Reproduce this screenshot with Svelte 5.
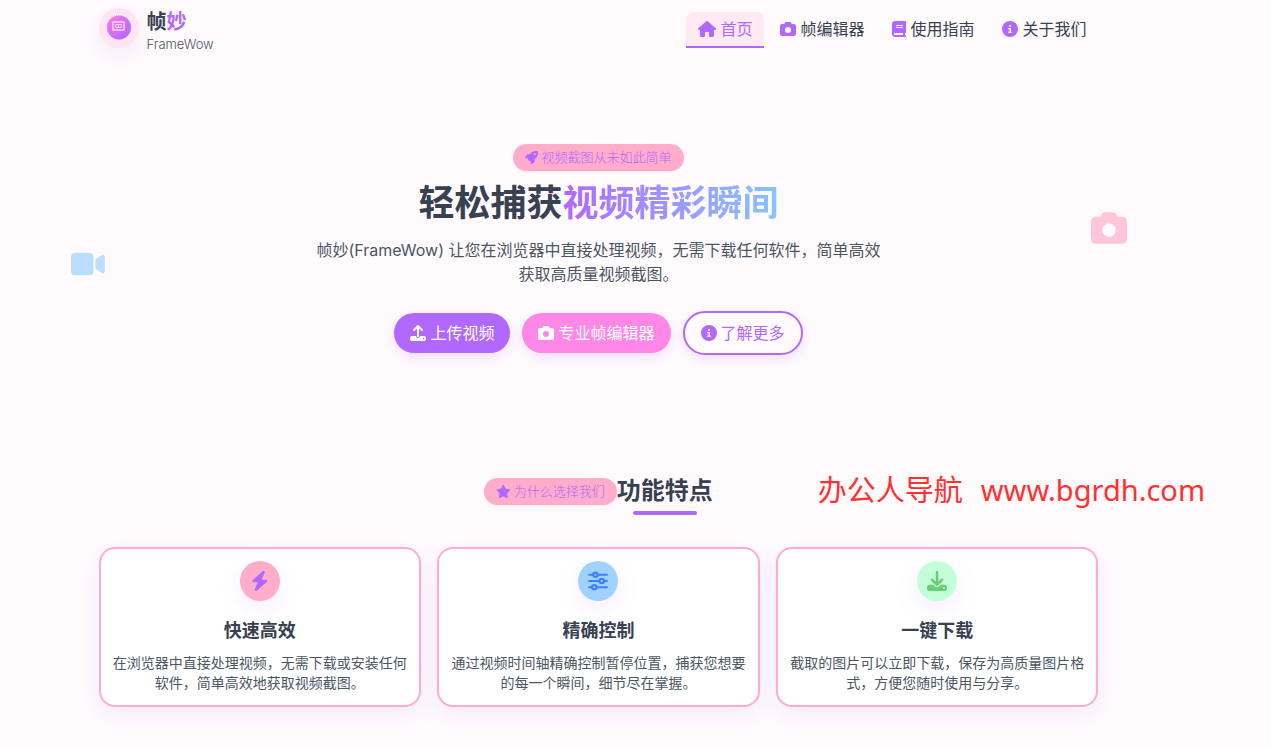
<script>
  const icons = {
    house: { w: 576, d: 'M575.8 255.5c0 18-15 32.1-32 32.1h-32l.7 160.2c0 2.7-.2 5.4-.5 8.1V472c0 22.1-17.9 40-40 40H456c-1.1 0-2.2 0-3.3-.1c-1.4 .1-2.8 .1-4.2 .1H416 392c-22.1 0-40-17.9-40-40V448 384c0-17.7-14.3-32-32-32H256c-17.7 0-32 14.3-32 32v64 24c0 22.1-17.9 40-40 40H160 128.1c-1.5 0-3-.1-4.5-.2c-1.2 .1-2.4 .2-3.6 .2H104c-22.1 0-40-17.9-40-40V360c0-.9 0-1.9 .1-2.8V287.6H32c-18 0-32-14-32-32.1c0-9 3-17 10-24L266.4 8c7-7 15-8 22-8s15 2 21 7L564.8 231.5c8 7 12 15 11 24z' },
    camera: { w: 512, d: 'M149.1 64.8L138.7 96H64C28.7 96 0 124.7 0 160V416c0 35.3 28.7 64 64 64H448c35.3 0 64-28.7 64-64V160c0-35.3-28.7-64-64-64H373.3L362.9 64.8C356.4 45.2 338.1 32 317.4 32H194.6c-20.7 0-39 13.2-45.5 32.8zM256 192a96 96 0 1 1 0 192 96 96 0 1 1 0-192z' },
    book: { w: 448, d: 'M96 0C43 0 0 43 0 96V416c0 53 43 96 96 96H384h32c17.7 0 32-14.3 32-32s-14.3-32-32-32V384c17.7 0 32-14.3 32-32V32c0-17.7-14.3-32-32-32H384 96zm0 384H352v64H96c-17.7 0-32-14.3-32-32s14.3-32 32-32zm32-240c0-8.8 7.2-16 16-16H336c8.8 0 16 7.2 16 16s-7.2 16-16 16H144c-8.8 0-16-7.2-16-16zm16 48H336c8.8 0 16 7.2 16 16s-7.2 16-16 16H144c-8.8 0-16-7.2-16-16s7.2-16 16-16z' },
    info: { w: 512, d: 'M256 512A256 256 0 1 0 256 0a256 256 0 1 0 0 512zM216 336h24V272H216c-13.3 0-24-10.7-24-24s10.7-24 24-24h48c13.3 0 24 10.7 24 24v88h8c13.3 0 24 10.7 24 24s-10.7 24-24 24H216c-13.3 0-24-10.7-24-24s10.7-24 24-24zm40-208a32 32 0 1 1 0 64 32 32 0 1 1 0-64z' },
    rocket: { w: 512, d: 'M156.6 384.9L125.7 354c-8.5-8.5-11.5-20.8-7.7-32.2c3-8.9 7-20.5 11.8-33.8L24 288c-8.6 0-16.6-4.6-20.9-12.1s-4.2-16.7 .2-24.1l52.5-88.5c13-21.9 36.5-35.3 61.9-35.3l82.3 0c2.4-4 4.8-7.7 7.2-11.3C289.1-4.1 411.1-8.1 483.9 5.3c11.6 2.1 20.6 11.2 22.8 22.8c13.4 72.9 9.3 194.8-111.4 276.7c-3.5 2.4-7.3 4.8-11.3 7.2v82.3c0 25.4-13.4 49-35.3 61.9l-88.5 52.5c-7.4 4.4-16.6 4.5-24.1 .2s-12.1-12.2-12.1-20.9V380.8c-14.1 4.9-26.4 8.9-35.7 11.9c-11.2 3.6-23.4 .5-31.8-7.8zM384 168a40 40 0 1 0 0-80 40 40 0 1 0 0 80z' },
    star: { w: 576, d: 'M316.9 18C311.6 7 300.4 0 288.1 0s-23.4 7-28.8 18L195 150.3 51.4 171.5c-12 1.8-22 10.2-25.7 21.7s-.7 24.2 7.9 32.7L137.8 329 113.2 474.7c-2 12 3 24.2 12.9 31.3s23 8 33.8 2.3l128.3-68.5 128.3 68.5c10.8 5.7 23.9 4.9 33.8-2.3s14.9-19.3 12.9-31.3L438.5 329 542.7 225.9c8.6-8.5 11.7-21.2 7.9-32.7s-13.7-19.9-25.7-21.7L381.2 150.3 316.9 18z' },
    bolt: { w: 448, d: 'M349.4 44.6c5.9-13.7 1.5-29.7-10.6-38.5s-28.6-8-39.9 1.8l-256 224c-10 8.8-13.6 22.9-8.9 35.3S50.7 288 64 288H175.5L98.6 467.4c-5.9 13.7-1.5 29.7 10.6 38.5s28.6 8 39.9-1.8l256-224c10-8.8 13.6-22.9 8.9-35.3s-16.6-20.7-30-20.7H272.5L349.4 44.6z' },
    sliders: { w: 512, line: true, d: 'M28 96H136M248 96H484M28 256H296M408 256H484M28 416H104M216 416H484M136 96a56 56 0 1 0 112 0a56 56 0 1 0 -112 0M296 256a56 56 0 1 0 112 0a56 56 0 1 0 -112 0M104 416a56 56 0 1 0 112 0a56 56 0 1 0 -112 0' },
    download: { w: 512, d: 'M288 32c0-17.7-14.3-32-32-32s-32 14.3-32 32V274.7l-73.4-73.4c-12.5-12.5-32.8-12.5-45.3 0s-12.5 32.8 0 45.3l128 128c12.5 12.5 32.8 12.5 45.3 0l128-128c12.5-12.5 12.5-32.8 0-45.3s-32.8-12.5-45.3 0L288 274.7V32zM64 352c-35.3 0-64 28.7-64 64v32c0 35.3 28.7 64 64 64H448c35.3 0 64-28.7 64-64V416c0-35.3-28.7-64-64-64H346.5l-45.3 45.3c-25 25-65.5 25-90.5 0L165.5 352H64zm368 56a24 24 0 1 1 0 48 24 24 0 1 1 0-48z' },
    upload: { w: 512, d: 'M288 109.3V352c0 17.7-14.3 32-32 32s-32-14.3-32-32V109.3l-73.4 73.4c-12.5 12.5-32.8 12.5-45.3 0s-12.5-32.8 0-45.3l128-128c12.5-12.5 32.8-12.5 45.3 0l128 128c12.5 12.5 12.5 32.8 0 45.3s-32.8 12.5-45.3 0L288 109.3zM64 352H192c0 35.3 28.7 64 64 64s64-28.7 64-64H448c35.3 0 64 28.7 64 64v32c0 35.3-28.7 64-64 64H64c-35.3 0-64-28.7-64-64V416c0-35.3 28.7-64 64-64zM432 456a24 24 0 1 0 0-48 24 24 0 1 0 0 48z' },
    video: { w: 576, d: 'M0 128C0 92.7 28.7 64 64 64H320c35.3 0 64 28.7 64 64V384c0 35.3-28.7 64-64 64H64c-35.3 0-64-28.7-64-64V128zM559.1 99.8c10.4 5.6 16.9 16.4 16.9 28.2V384c0 11.8-6.5 22.6-16.9 28.2s-23 5-32.9-1.6l-96-64L416 337.1V320 192 174.9l14.2-9.5 96-64c9.8-6.5 22.4-7.2 32.9-1.6z' }
  };

  const links = [
    { id: 'home', icon: 'house', text: '首页' },
    { id: 'editor', icon: 'camera', text: '帧编辑器' },
    { id: 'guide', icon: 'book', text: '使用指南' },
    { id: 'about', icon: 'info', text: '关于我们' }
  ];

  const features = [
    { icon: 'bolt', tone: 'pink', title: '快速高效', text: '在浏览器中直接处理视频，无需下载或安装任何软件，简单高效地获取视频截图。' },
    { icon: 'sliders', tone: 'blue', title: '精确控制', text: '通过视频时间轴精确控制暂停位置，捕获您想要的每一个瞬间，细节尽在掌握。' },
    { icon: 'download', tone: 'green', title: '一键下载', text: '截取的图片可以立即下载，保存为高质量图片格式，方便您随时使用与分享。' }
  ];

  let active = $state('home');
</script>

{#snippet icon(name)}
  <svg class="icon" class:line={icons[name].line} viewBox="0 0 {icons[name].w} 512" aria-hidden="true">
    <path d={icons[name].d} />
  </svg>
{/snippet}

<div class="page">
  <header class="container header">
    <a class="logo" href="#home">
      <span class="logo-mark">
        <svg viewBox="0 0 40 40" aria-hidden="true">
          <defs>
            <linearGradient id="mark" x1="0" y1="0" x2="1" y2="1">
              <stop offset="0" stop-color="#ff7ae5" />
              <stop offset="1" stop-color="#a866ff" />
            </linearGradient>
          </defs>
          <circle cx="20" cy="19.5" r="13" fill="#fff" />
          <circle cx="20" cy="19.5" r="12" fill="url(#mark)" />
          <circle cx="20" cy="19.5" r="12.2" fill="none" stroke="#d977f5" stroke-width=".8" stroke-dasharray="1 1" />
          <rect x="14" y="14" width="11" height="8" fill="none" stroke="#ffd9fa" stroke-width="1.4" />
          <path d="M16.8 16.5h5.4v3h-5.4zM19.5 16.5v3" fill="none" stroke="#ffd9fa" stroke-width="1" />
        </svg>
      </span>
      <span class="logo-text">
        <strong>帧<em>妙</em></strong>
        <small>FrameWow</small>
      </span>
    </a>
    <nav>
      {#each links as link}
        <a href="#{link.id}" class:active={active === link.id} onclick={() => (active = link.id)}>
          {@render icon(link.icon)}{link.text}
        </a>
      {/each}
    </nav>
  </header>

  <main>
    <section class="hero">
      <span class="float float-video">{@render icon('video')}</span>
      <span class="float float-camera">{@render icon('camera')}</span>
      <span class="badge">{@render icon('rocket')}视频截图从未如此简单</span>
      <h1>轻松捕获<span>视频精彩瞬间</span></h1>
      <p>帧妙(FrameWow) 让您在浏览器中直接处理视频，无需下载任何软件，简单高效获取高质量视频截图。</p>
      <div class="actions">
        <button class="btn primary">{@render icon('upload')}上传视频</button>
        <button class="btn secondary">{@render icon('camera')}专业帧编辑器</button>
        <button class="btn outline">{@render icon('info')}了解更多</button>
      </div>
    </section>

    <section class="container features">
      <div class="section-title">
        <span class="badge">{@render icon('star')}为什么选择我们</span>
        <h2>功能特点</h2>
      </div>
      <div class="grid">
        {#each features as f}
          <article class="card">
            <span class="circle {f.tone}">{@render icon(f.icon)}</span>
            <h3>{f.title}</h3>
            <p>{f.text}</p>
          </article>
        {/each}
      </div>
    </section>
  </main>

  <div class="watermark"><span>办公人导航</span><span>www.bgrdh.com</span></div>
</div>

<style>
  :global(body) { margin: 0; background: #fffbfd; }

  .page {
    position: relative;
    box-sizing: border-box;
    padding-right: 74px;
    padding-bottom: 40px;
    font-family: Inter, "Noto Sans CJK SC", sans-serif;
    font-weight: 400;
    font-size: 16px;
    line-height: 24px;
    color: #374151;
  }

  .container { max-width: 1000px; margin: 0 auto; }
  a { color: inherit; text-decoration: none; }
  h1, h2, h3, p { margin: 0; }

  .icon { height: 1em; fill: currentColor; flex: none; }
  .icon.line { fill: none; stroke: currentColor; stroke-width: 56; stroke-linecap: round; }

  .header { display: flex; justify-content: space-between; align-items: center; padding: 8px 0; }
  .logo { display: flex; align-items: flex-start; gap: 8px; }
  .logo-mark {
    width: 40px;
    height: 40px;
    border-radius: 50%;
    background: #ffe4f1;
    box-shadow: 0 8px 24px rgba(176, 104, 255, 0.12);
  }
  .logo-mark svg { display: block; }
  .logo-text { display: flex; flex-direction: column; }
  .logo-text strong { font-size: 20px; line-height: 28px; font-weight: 700; }
  .logo-text em { font-style: normal; color: #b068ff; }
  .logo-text small { font-size: 13px; line-height: 16px; font-weight: 300; color: #4b5563; }

  nav { display: flex; gap: 4px; }
  nav a {
    display: flex;
    align-items: center;
    gap: 4px;
    padding: 5px 12px;
    border-bottom: 2px solid transparent;
  }
  nav .icon { color: #b068ff; }
  nav a.active {
    color: #b068ff;
    background: #ffe9f3;
    border-color: #b068ff;
    border-radius: 8px 8px 0 0;
  }

  .hero {
    position: relative;
    display: flex;
    flex-direction: column;
    align-items: center;
    padding: 84px 0 120px;
    text-align: center;
  }
  .hero h1 {
    margin: 12px 0 15px;
    font-size: 36px;
    line-height: 40px;
    font-weight: 700;
  }
  .hero h1 span {
    background: linear-gradient(90deg, #b068ff, #87c5ff);
    -webkit-background-clip: text;
    background-clip: text;
    color: transparent;
  }
  .hero p { max-width: 576px; color: #4b5563; }

  .float { position: absolute; display: flex; }
  .float-video { left: 71px; top: 189px; font-size: 30px; color: #bbdeff; }
  .float-camera { right: 70px; top: 150px; font-size: 36px; color: #ffc5d9; }

  .badge {
    display: inline-flex;
    align-items: center;
    gap: 3px;
    padding: 4px 12px;
    border-radius: 14px;
    background: #ffadcb;
    color: #b068ff;
    font-size: 13px;
    line-height: 19px;
    font-weight: 300;
    box-shadow: 0 1px 2px rgba(0, 0, 0, 0.05);
  }

  .actions { display: flex; align-items: center; gap: 12px; margin-top: 25px; }
  .btn {
    display: flex;
    align-items: center;
    gap: 4px;
    padding: 8px 16px;
    border: 0;
    border-radius: 22px;
    font: inherit;
    color: #fff;
    cursor: pointer;
    box-shadow: 0 4px 12px rgba(176, 104, 255, 0.2);
  }
  .primary { background: #b068ff; }
  .secondary { background: #ff87e5; }
  .outline { background: #fffbfd; border: 2px solid #b068ff; color: #b068ff; }

  .section-title { display: flex; justify-content: center; align-items: center; margin-bottom: 40px; }
  .section-title h2 { position: relative; font-size: 24px; line-height: 32px; font-weight: 700; }
  .section-title h2::after {
    content: '';
    position: absolute;
    left: 16px;
    right: 16px;
    bottom: -8px;
    height: 4px;
    border-radius: 2px;
    background: #b068ff;
  }

  .grid { display: grid; grid-template-columns: repeat(3, 1fr); gap: 16px; }
  .card {
    display: flex;
    flex-direction: column;
    align-items: center;
    padding: 12px;
    border: 2px solid #ffadcb;
    border-radius: 16px;
    background: #fff;
    text-align: center;
    box-shadow: 0 8px 24px rgba(176, 104, 255, 0.12);
  }
  .card h3 { margin: 16px 0 8px; font-size: 18px; line-height: 28px; font-weight: 700; }
  .card p { font-size: 14px; line-height: 20px; color: #4b5563; }

  .circle {
    display: flex;
    align-items: center;
    justify-content: center;
    width: 40px;
    height: 40px;
    border-radius: 50%;
    font-size: 20px;
    box-shadow: 0 8px 24px rgba(176, 104, 255, 0.12);
  }
  .pink { background: #ffadcb; color: #b068ff; }
  .blue { background: #a1d2ff; color: #3b82f6; }
  .green { background: #c2ffd8; color: #6bcb77; }

  .watermark {
    position: absolute;
    right: 66px;
    top: 470px;
    display: flex;
    gap: 18px;
    font-family: "Noto Sans", "Noto Sans CJK SC", sans-serif;
    font-weight: 400;
    font-size: 29px;
    line-height: 40px;
    color: #ff3030;
  }
</style>
